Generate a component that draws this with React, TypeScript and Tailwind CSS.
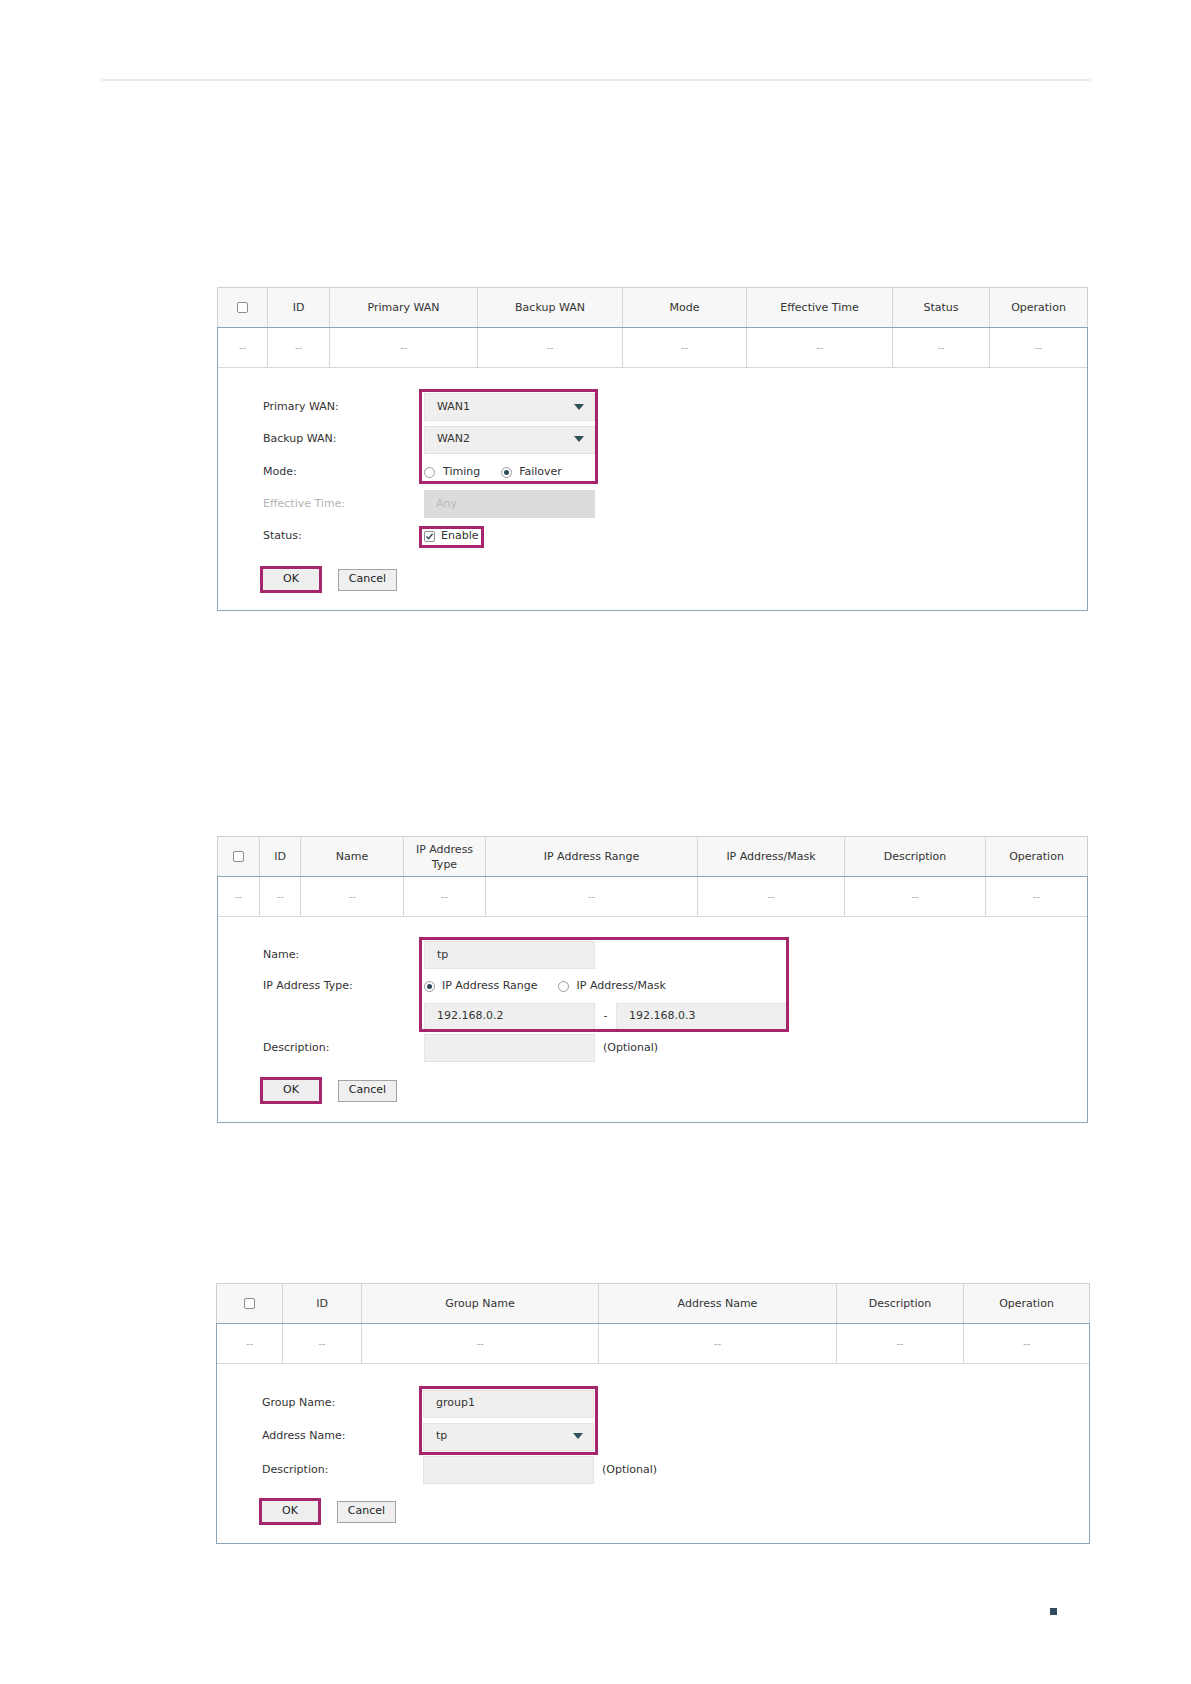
import type { ReactNode } from "react";

const RED = "border-[#a4276c]";

function Box() {
  return <span className="inline-block w-[11px] h-[11px] rounded-[2px] border border-[#8c8c8c] bg-white" />;
}

function CheckedBox() {
  return (
    <span className="inline-flex items-center justify-center w-[11px] h-[11px] rounded-[2px] border border-[#8c8c8c] bg-white">
      <svg width="9" height="9" viewBox="0 0 9 9">
        <path d="M1.5 4.6 L3.6 6.8 L7.6 1.8" fill="none" stroke="#2d4b5a" strokeWidth="1.4" />
      </svg>
    </span>
  );
}

function Radio({ on }: { on?: boolean }) {
  return (
    <span className="inline-flex items-center justify-center w-[11px] h-[11px] rounded-full border border-[#9a9a9a] bg-white">
      {on && <span className="w-[5px] h-[5px] rounded-full bg-[#2d4b5a]" />}
    </span>
  );
}

function Select({ value }: { value: string }) {
  return (
    <div className="w-[171px] h-[28px] bg-[#efefef] border border-[#e4e4e4] flex items-center justify-between pl-[12px] pr-[10px] text-[#333]">
      <span>{value}</span>
      <svg width="10" height="7" viewBox="0 0 10 7">
        <path d="M0 0 H10 L5 6 Z" fill="#2f4f5b" />
      </svg>
    </div>
  );
}

function Input({ value, disabled }: { value?: string; disabled?: boolean }) {
  return (
    <div
      className={
        disabled
          ? "w-[171px] h-[28px] bg-[#dcdcdc] flex items-center pl-[12px] text-[#b8b8b8]"
          : "w-[171px] h-[28px] bg-[#efefef] border border-[#e4e4e4] flex items-center pl-[12px] text-[#333]"
      }
    >
      {value}
    </div>
  );
}

function Row({ label, h, dim, children }: { label: string; h: string; dim?: boolean; children?: ReactNode }) {
  return (
    <div className={`flex items-center ${h}`}>
      <div className={`w-[161px] shrink-0 ${dim ? "text-[#b3b3b3]" : "text-[#333]"}`}>{label}</div>
      <div className="flex items-center">{children}</div>
    </div>
  );
}

function Buttons({ mt }: { mt: string }) {
  return (
    <div className={`flex items-center gap-[16px] -ml-[3px] ${mt}`}>
      <div className={`w-[62px] h-[27px] border-[3px] ${RED} bg-[#eeeeee] flex items-center justify-center text-[#222]`}>OK</div>
      <div className="w-[59px] h-[22px] border border-[#a3a3a3] bg-[#efefef] flex items-center justify-center text-[#222]">Cancel</div>
    </div>
  );
}

function TableHead({ cols, grid }: { cols: ReactNode[]; grid: string }) {
  return (
    <div className={`grid ${grid} h-[40px] bg-[#f7f7f7] border border-b-0 border-[#d0d0d0] text-[#333]`}>
      {cols.map((c, i) => (
        <div key={i} className="flex items-center justify-center text-center leading-[15px] border-l border-[#d6d6d6] first:border-l-0">
          {i === 0 ? <Box /> : c}
        </div>
      ))}
    </div>
  );
}

function DataRow({ n, grid }: { n: number; grid: string }) {
  return (
    <div className={`grid ${grid} h-[40px] border-b border-[#d9d9d9]`}>
      {Array.from({ length: n }).map((_, i) => (
        <div key={i} className="flex items-center justify-center text-[10px] text-[#b0b0b0] border-l border-[#d6d6d6] first:border-l-0">
          --
        </div>
      ))}
    </div>
  );
}

export default function App() {
  const g1 = "grid-cols-[49px_62px_148px_145px_124px_146px_97px_1fr]";
  const g2 = "grid-cols-[41px_41px_103px_82px_212px_147px_141px_1fr]";
  const g3 = "grid-cols-[65px_79px_237px_238px_127px_1fr]";

  return (
    <div className="w-[1191px] h-[1684px] bg-white overflow-hidden font-['DejaVu_Sans',sans-serif] text-[11px]">
      <div className="pt-[79px] pl-[102px]">
        <div className="w-[988px] h-[2px] bg-[#e8e8e8]" />
      </div>

      {/* WAN failover */}
      <div className="ml-[217px] mt-[206px] w-[871px]">
        <TableHead
          grid={g1}
          cols={["", "ID", "Primary WAN", "Backup WAN", "Mode", "Effective Time", "Status", "Operation"]}
        />
        <div className="border border-[#8ca4b4]">
          <DataRow n={8} grid={g1} />
          <div className="pl-[45px] pt-[23px] pb-[17px]">
            <div className="relative">
              <Row label="Primary WAN:" h="h-[32px]">
                <Select value="WAN1" />
              </Row>
              <Row label="Backup WAN:" h="h-[33px]">
                <Select value="WAN2" />
              </Row>
              <Row label="Mode:" h="h-[32px]">
                <div className="flex items-center text-[#333]">
                  <Radio />
                  <span className="ml-[8px]">Timing</span>
                  <span className="ml-[21px] flex items-center">
                    <Radio on />
                  </span>
                  <span className="ml-[7px]">Failover</span>
                </div>
              </Row>
              <div className={`absolute left-[156px] top-[-2px] w-[179px] h-[95px] border-[3px] ${RED} pointer-events-none`} />
            </div>
            <Row label="Effective Time:" h="h-[32px]" dim>
              <Input value="Any" disabled />
            </Row>
            <Row label="Status:" h="h-[33px]">
              <div className={`-ml-[5px] flex items-center h-[22px] border-[3px] ${RED} pl-[2px] pr-[3px] gap-[6px] text-[#333]`}>
                <CheckedBox />
                <span>Enable</span>
              </div>
            </Row>
            <Buttons mt="mt-[13px]" />
          </div>
        </div>
      </div>

      {/* IP address */}
      <div className="ml-[217px] mt-[225px] w-[871px]">
        <TableHead
          grid={g2}
          cols={[
            "",
            "ID",
            "Name",
            <span key="t">
              IP Address
              <br />
              Type
            </span>,
            "IP Address Range",
            "IP Address/Mask",
            "Description",
            "Operation",
          ]}
        />
        <div className="border border-[#8ca4b4]">
          <DataRow n={8} grid={g2} />
          <div className="pl-[45px] pt-[22px] pb-[18px]">
            <div className="relative">
              <Row label="Name:" h="h-[32px]">
                <Input value="tp" />
              </Row>
              <Row label="IP Address Type:" h="h-[30px]">
                <div className="flex items-center text-[#333]">
                  <Radio on />
                  <span className="ml-[7px]">IP Address Range</span>
                  <span className="ml-[20px] flex items-center">
                    <Radio />
                  </span>
                  <span className="ml-[8px]">IP Address/Mask</span>
                </div>
              </Row>
              <Row label="" h="h-[31px]">
                <Input value="192.168.0.2" />
                <span className="w-[21px] text-center text-[#333]">-</span>
                <Input value="192.168.0.3" />
              </Row>
              <div className={`absolute left-[156px] top-[-2px] w-[370px] h-[95px] border-[3px] ${RED} pointer-events-none`} />
            </div>
            <Row label="Description:" h="h-[32px]">
              <Input />
              <span className="ml-[8px] text-[#333]">(Optional)</span>
            </Row>
            <Buttons mt="mt-[13px]" />
          </div>
        </div>
      </div>

      {/* Address group */}
      <div className="ml-[216px] mt-[160px] w-[874px]">
        <TableHead grid={g3} cols={["", "ID", "Group Name", "Address Name", "Description", "Operation"]} />
        <div className="border border-[#8ca4b4]">
          <DataRow n={6} grid={g3} />
          <div className="pl-[45px] pt-[23px] pb-[18px]">
            <div className="relative">
              <Row label="Group Name:" h="h-[33px]">
                <Input value="group1" />
              </Row>
              <Row label="Address Name:" h="h-[33px]">
                <Select value="tp" />
              </Row>
              <div className={`absolute left-[157px] top-[-1px] w-[179px] h-[69px] border-[3px] ${RED} pointer-events-none`} />
            </div>
            <Row label="Description:" h="h-[34px]">
              <Input />
              <span className="ml-[8px] text-[#333]">(Optional)</span>
            </Row>
            <Buttons mt="mt-[11px]" />
          </div>
        </div>
      </div>

      <div className="ml-[1050px] mt-[64px] w-[7px] h-[7px] bg-[#2f4a5e]" />
    </div>
  );
}
